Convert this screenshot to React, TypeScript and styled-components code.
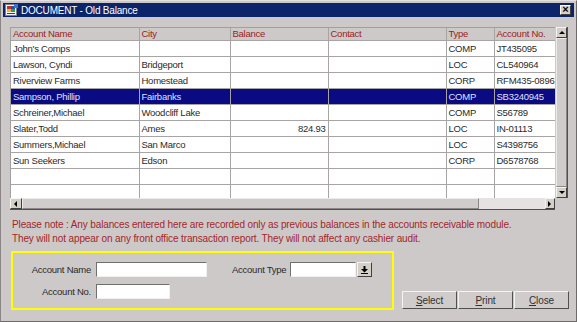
import React from "react";
import styled, { createGlobalStyle } from "styled-components";

const GlobalStyle = createGlobalStyle`
  html, body {
    margin: 0;
    padding: 0;
    background: #cdc9c9;
  }
  * {
    box-sizing: border-box;
  }
`;

interface Account {
  name: string;
  city: string;
  balance: string;
  contact: string;
  type: string;
  number: string;
}

const accounts: Account[] = [
  { name: "John's Comps", city: "", balance: "", contact: "", type: "COMP", number: "JT435095" },
  { name: "Lawson, Cyndi", city: "Bridgeport", balance: "", contact: "", type: "LOC", number: "CL540964" },
  { name: "Riverview Farms", city: "Homestead", balance: "", contact: "", type: "CORP", number: "RFM435-0896" },
  { name: "Sampson, Phillip", city: "Fairbanks", balance: "", contact: "", type: "COMP", number: "SB3240945" },
  { name: "Schreiner,Michael", city: "Woodcliff Lake", balance: "", contact: "", type: "COMP", number: "S56789" },
  { name: "Slater,Todd", city: "Ames", balance: "824.93", contact: "", type: "LOC", number: "IN-01113" },
  { name: "Summers,Michael", city: "San Marco", balance: "", contact: "", type: "LOC", number: "S4398756" },
  { name: "Sun Seekers", city: "Edson", balance: "", contact: "", type: "CORP", number: "D6578768" },
  { name: "", city: "", balance: "", contact: "", type: "", number: "" },
  { name: "", city: "", balance: "", contact: "", type: "", number: "" },
];

const columns = [
  { title: "Account Name", width: 128 },
  { title: "City", width: 91 },
  { title: "Balance", width: 98 },
  { title: "Contact", width: 118 },
  { title: "Type", width: 48 },
  { title: "Account No.", width: 62 },
];

const SELECTED = 3;

function DocIcon() {
  return (
    <svg width="13" height="12" viewBox="0 0 13 12">
      <rect x="0.5" y="0.5" width="11" height="11" fill="#f4f4f4" stroke="#808080" />
      <rect x="2" y="2" width="4" height="3" fill="#c03030" />
      <rect x="6" y="2" width="4" height="3" fill="#2050c0" />
      <rect x="2" y="5" width="4" height="3" fill="#e0c020" />
      <rect x="6" y="5" width="4" height="3" fill="#30a040" />
      <rect x="2" y="9" width="8" height="1" fill="#404040" />
      <rect x="9" y="0" width="4" height="4" fill="#4070d0" />
    </svg>
  );
}

function Arrow({ dir }: { dir: "up" | "down" | "left" | "right" }) {
  const points = {
    up: "1,5 4,2 7,5",
    down: "1,2 4,5 7,2",
    left: "5,1 2,4 5,7",
    right: "2,1 5,4 2,7",
  }[dir];
  return (
    <svg width="8" height="8" viewBox="0 0 8 8">
      <polygon points={points} fill="#000" />
    </svg>
  );
}

function DropGlyph() {
  return (
    <svg width="7" height="8" viewBox="0 0 7 8">
      <rect x="2.5" y="0" width="2" height="3" fill="#000" />
      <polygon points="0,3 7,3 3.5,6.5" fill="#000" />
      <rect x="0" y="7" width="7" height="1" fill="#000" />
    </svg>
  );
}

export default function App() {
  return (
    <>
      <GlobalStyle />
      <Window>
        <TitleBar>
          <DocIcon />
          <TitleText>DOCUMENT - Old Balance</TitleText>
          <CloseBox>×</CloseBox>
        </TitleBar>
        <Body>
          <GridFrame>
            <TableArea>
              <Table>
                <colgroup>
                  {columns.map((c) => (
                    <col key={c.title} style={{ width: c.width }} />
                  ))}
                </colgroup>
                <thead>
                  <tr>
                    {columns.map((c) => (
                      <HeadCell key={c.title}>{c.title}</HeadCell>
                    ))}
                  </tr>
                </thead>
                <tbody>
                  {accounts.map((a, i) => (
                    <Row key={i} $selected={i === SELECTED}>
                      <Cell>{a.name}</Cell>
                      <Cell>{a.city}</Cell>
                      <Cell $right>{a.balance}</Cell>
                      <Cell>{a.contact}</Cell>
                      <Cell>{a.type}</Cell>
                      <Cell>{a.number}</Cell>
                    </Row>
                  ))}
                </tbody>
              </Table>
            </TableArea>
            <VScroll>
              <ScrollButton $h={11}>
                <Arrow dir="up" />
              </ScrollButton>
              <VThumb />
              <ScrollButton $h={11}>
                <Arrow dir="down" />
              </ScrollButton>
            </VScroll>
            <HScroll>
              <ScrollButton $w={12}>
                <Arrow dir="left" />
              </ScrollButton>
              <HThumb />
              <HTrack />
              <ScrollButton $w={10}>
                <Arrow dir="right" />
              </ScrollButton>
            </HScroll>
            <Corner />
          </GridFrame>

          <Note>
            Please note : Any balances entered here are recorded only as previous balances in the
            accounts receivable module.
            <br />
            They will not appear on any front office transaction report. They will not affect any
            cashier audit.
          </Note>

          <Bottom>
            <SearchBox>
              <FieldLabel>Account Name</FieldLabel>
              <Input $w={111} />
              <FieldLabel $left>Account Type</FieldLabel>
              <Combo>
                <Input $w={66} />
                <DropButton>
                  <DropGlyph />
                </DropButton>
              </Combo>
              <FieldLabel>Account No.</FieldLabel>
              <Input $w={74} />
            </SearchBox>
            <Buttons>
              <Button>
                <u>S</u>elect
              </Button>
              <Button>
                <u>P</u>rint
              </Button>
              <Button>
                <u>C</u>lose
              </Button>
            </Buttons>
          </Bottom>
        </Body>
      </Window>
    </>
  );
}

const Window = styled.div`
  width: 577px;
  height: 322px;
  padding: 2px;
  background: #cdc9c9;
  border: 1px solid #6e6a6a;
  border-top-color: #e4e0e0;
  border-left-color: #8a8686;
  font-family: "Liberation Sans", Arial, sans-serif;
  font-size: 9.5px;
  letter-spacing: -0.25px;
  color: #2a2a2a;
  display: flex;
  flex-direction: column;
`;

const TitleBar = styled.div`
  height: 14px;
  background: #0c246a;
  display: flex;
  align-items: center;
  padding: 0 3px 0 2px;
  gap: 3px;
`;

const TitleText = styled.span`
  flex: 1;
  color: #fff;
  font-size: 10px;
  letter-spacing: -0.2px;
`;

const CloseBox = styled.div`
  width: 11px;
  height: 10px;
  background: #d4d0c8;
  border: 1px solid;
  border-color: #fff #404040 #404040 #fff;
  color: #000;
  font-size: 11px;
  font-weight: bold;
  line-height: 7px;
  text-align: center;
  letter-spacing: 0;
`;

const Body = styled.div`
  flex: 1;
  padding: 10px 0 0 7px;
  display: flex;
  flex-direction: column;
`;

const GridFrame = styled.div`
  display: grid;
  grid-template-columns: 545px 13px;
  grid-template-rows: 171px 12px;
  width: 558px;
`;

const TableArea = styled.div`
  overflow: hidden;
  background: #fff;
  border-top: 1px solid #a0a0a0;
  border-left: 1px solid #a0a0a0;
`;

const Table = styled.table`
  table-layout: fixed;
  border-collapse: collapse;
  width: 545px;
`;

const HeadCell = styled.th`
  height: 12px;
  padding: 0 2px;
  background: #cdc9c9;
  color: #9b2222;
  font-weight: normal;
  text-align: left;
  border-right: 1px solid #a8a4a4;
  border-bottom: 1px solid #a8a4a4;
  white-space: nowrap;
  overflow: hidden;
  line-height: 12px;
`;

const Row = styled.tr<{ $selected?: boolean }>`
  background: ${(p) => (p.$selected ? "#0a0a82" : "#fff")};
  color: ${(p) => (p.$selected ? "#dfe2ff" : "#2a2a2a")};
`;

const Cell = styled.td<{ $right?: boolean }>`
  height: 16px;
  padding: 0 2px;
  border-right: 1px solid #a8a4a4;
  border-bottom: 1px solid #a8a4a4;
  white-space: nowrap;
  overflow: hidden;
  text-align: ${(p) => (p.$right ? "right" : "left")};
  line-height: 15px;
`;

const ScrollButton = styled.div<{ $w?: number; $h?: number }>`
  flex: none;
  width: ${(p) => (p.$w ? `${p.$w}px` : "auto")};
  height: ${(p) => (p.$h ? `${p.$h}px` : "auto")};
  background: #d4d0c8;
  border: 1px solid;
  border-color: #f4f4f4 #404040 #404040 #f4f4f4;
  display: flex;
  align-items: center;
  justify-content: center;
`;

const VScroll = styled.div`
  display: flex;
  flex-direction: column;
  padding-left: 1px;
  border-right: 1px solid #505050;
`;

const VThumb = styled.div`
  flex: 1;
  background: #d0cccc;
  border: 1px solid;
  border-color: #eeeaea #8a8686 #8a8686 #eeeaea;
`;

const HScroll = styled.div`
  display: flex;
  border-bottom: 1px solid #505050;
`;

const HThumb = styled.div`
  width: 457px;
  background: #d0cccc;
  border: 1px solid;
  border-color: #eeeaea #8a8686 #8a8686 #eeeaea;
`;

const HTrack = styled.div`
  flex: 1;
  background: #e6e2e2;
`;

const Corner = styled.div`
  background: #cdc9c9;
`;

const Note = styled.div`
  margin-top: 8px;
  padding-left: 2px;
  color: #a3262a;
  font-size: 10px;
  line-height: 14px;
  letter-spacing: -0.13px;
`;

const Bottom = styled.div`
  margin-top: 5px;
  display: flex;
  align-items: flex-end;
  gap: 8px;
`;

const SearchBox = styled.div`
  width: 383px;
  height: 59px;
  margin-left: 1px;
  border: 2px solid #ffff00;
  display: grid;
  grid-template-columns: 83px 136px 58px auto;
  grid-template-rows: 15px 15px;
  row-gap: 7px;
  align-items: center;
  padding-top: 9px;
  align-content: start;
`;

const FieldLabel = styled.label<{ $left?: boolean }>`
  text-align: ${(p) => (p.$left ? "left" : "right")};
  padding-right: ${(p) => (p.$left ? "0" : "5px")};
  color: #2a2a2a;
  white-space: nowrap;
`;

const Input = styled.div<{ $w: number }>`
  width: ${(p) => p.$w}px;
  height: 15px;
  background: #fff;
  border: 1px solid;
  border-color: #707070 #f0f0f0 #f0f0f0 #707070;
`;

const Combo = styled.div`
  display: flex;
  gap: 1px;
`;

const DropButton = styled.div`
  width: 15px;
  height: 15px;
  background: #d4d0c8;
  border: 1px solid;
  border-color: #f4f4f4 #404040 #404040 #f4f4f4;
  display: flex;
  align-items: center;
  justify-content: center;
`;

const Buttons = styled.div`
  display: flex;
  gap: 1px;
  margin-bottom: 1px;
`;

const Button = styled.div`
  width: 55px;
  height: 18px;
  background: #d0cccc;
  border: 1px solid;
  border-color: #f4f4f4 #505050 #505050 #f4f4f4;
  display: flex;
  align-items: center;
  justify-content: center;
  color: #303030;
  font-size: 10px;
  letter-spacing: -0.1px;

  u {
    text-decoration-thickness: 1px;
  }
`;
